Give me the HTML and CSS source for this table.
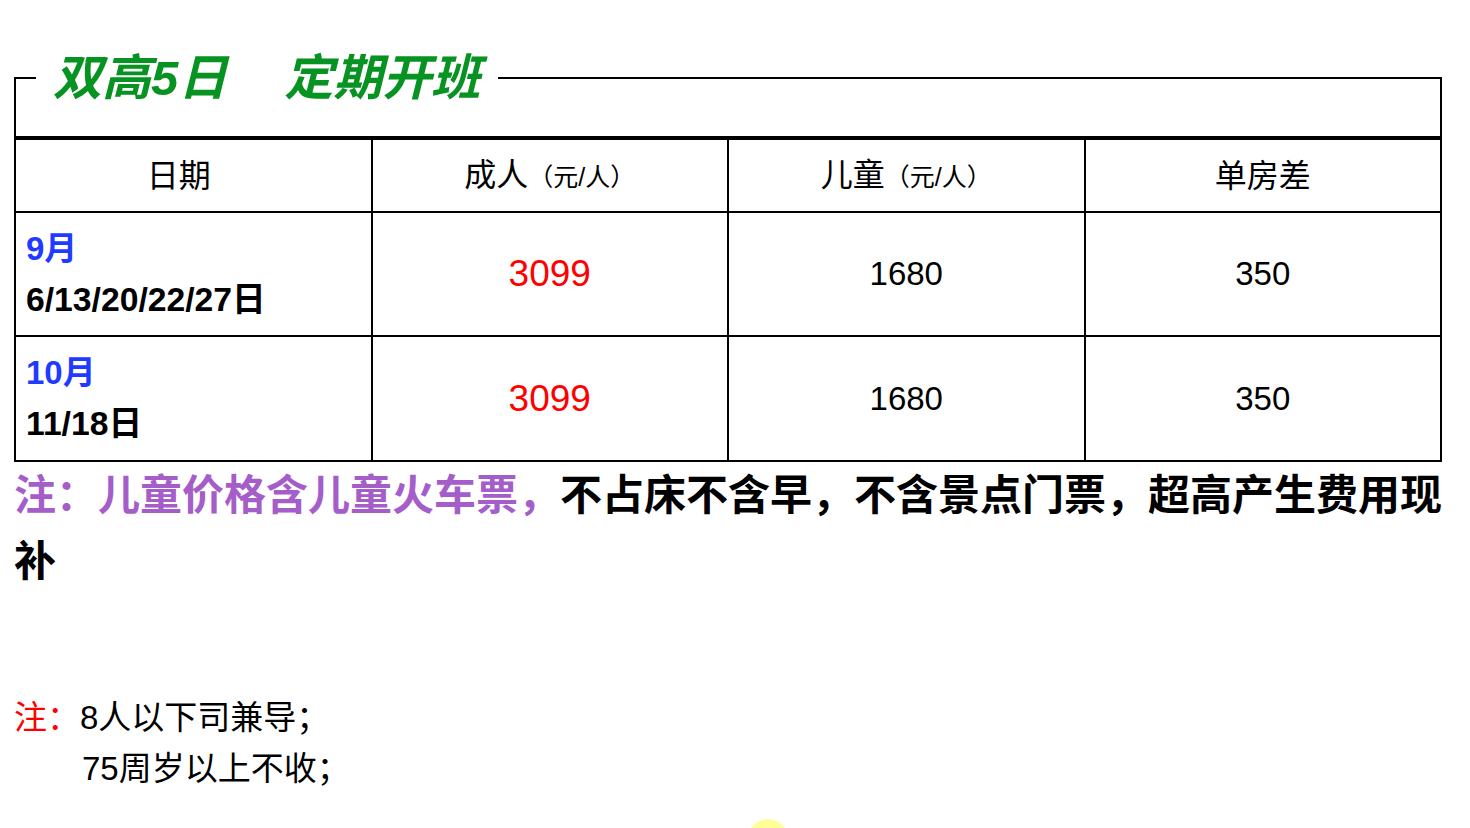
FILE: index.html
```html
<!DOCTYPE html>
<html lang="zh-CN">
<head>
<meta charset="utf-8">
<title>双高5日 定期开班</title>
<link rel="stylesheet" href="styles.css">
</head>
<body>
<div class="page">
  <fieldset class="title-box">
    <legend class="title"><span class="title-a">双高5日</span><span class="title-b">定期开班</span></legend>
    <div class="title-space"></div>
  </fieldset>
  <table class="price-table">
    <colgroup><col><col><col><col></colgroup>
    <thead>
      <tr>
        <th class="first">日期</th>
        <th>成人<span class="unit">（元/人）</span></th>
        <th>儿童<span class="unit">（元/人）</span></th>
        <th>单房差</th>
      </tr>
    </thead>
    <tbody>
      <tr>
        <td class="date"><div class="month">9月</div><div class="days">6/13/20/22/27日</div></td>
        <td class="adult">3099</td>
        <td class="num">1680</td>
        <td class="num">350</td>
      </tr>
      <tr>
        <td class="date last"><div class="month">10月</div><div class="days">11/18日</div></td>
        <td class="adult last">3099</td>
        <td class="num last">1680</td>
        <td class="num last">350</td>
      </tr>
    </tbody>
  </table>
  <p class="remark"><span class="remark-purple">注：儿童价格含儿童火车票，</span>不占床不含早，不含景点门票，超高产生费用现补</p>
  <div class="notes">
    <div class="note-line"><span class="note-label">注：</span>8人以下司兼导；</div>
    <div class="note-line indent">75周岁以上不收；</div>
  </div>
</div>
<div class="float-dot"></div>
</body>
</html>
```
FILE: styles.css
```css
html, body {
  margin: 0;
  padding: 0;
  background: #ffffff;
}
body {
  font-family: "Liberation Sans", "Noto Sans CJK SC", sans-serif;
  color: #000000;
}
.page {
  padding: 0 14px;
}
.title-box {
  margin: 49px 0 0 0;
  padding: 0;
  border: 2px solid #000000;
  min-inline-size: 0;
  width: 1428px;
  box-sizing: border-box;
}
.title {
  margin-left: 20px;
  padding: 0 18px 0 17px;
  font-size: 49px;
  line-height: 58px;
  font-weight: bold;
  font-style: italic;
  color: #079321;
  white-space: nowrap;
}
.title-b {
  margin-left: 57px;
}
.title-space {
  height: 29px;
}
.price-table {
  width: 1428px;
  table-layout: fixed;
  border-collapse: separate;
  border-spacing: 0;
  border-left: 2px solid #000000;
  border-top: 2px solid #000000;
}
.price-table th,
.price-table td {
  border-right: 2px solid #000000;
  border-bottom: 2px solid #000000;
  padding: 0;
  text-align: center;
  vertical-align: middle;
  box-sizing: border-box;
}
.price-table th {
  font-weight: normal;
  font-size: 32px;
  line-height: 40px;
  height: 73px;
}
.price-table th.first {
  padding-right: 29px;
}
.unit {
  font-size: 25px;
}
.price-table td {
  height: 124px;
}
.price-table td.last {
  height: 125px;
}
.price-table td.date {
  text-align: left;
  padding: 10px 0 10px 10px;
  font-size: 33px;
  line-height: 51px;
  font-weight: bold;
}
.price-table td.date.last {
  padding-bottom: 11px;
}
.month {
  color: #1f3bff;
}
.days {
  color: #000000;
  font-size: 33.7px;
}
.adult {
  color: #ff0000;
  font-size: 37px;
}
.num {
  font-size: 33px;
}
.remark {
  margin: -3px 0 0 0;
  width: 1430px;
  font-size: 42px;
  line-height: 66px;
  font-weight: bold;
  color: #000000;
  font-family: "Noto Sans CJK SC", sans-serif;
}
.remark-purple {
  color: #a55ec9;
}
.notes {
  margin-top: 101px;
  font-size: 33px;
  line-height: 51px;
}
.note-label {
  color: #ff0000;
}
.indent {
  padding-left: 68px;
}
.float-dot {
  position: absolute;
  left: 748px;
  top: 819px;
  width: 40px;
  height: 40px;
  border-radius: 50%;
  background: #ffff99;
}
```
